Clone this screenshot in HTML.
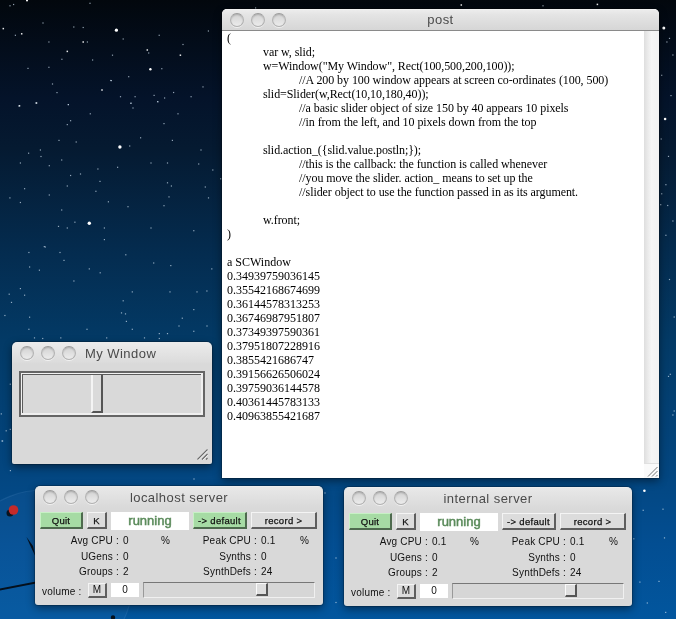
<!DOCTYPE html>
<html><head><meta charset="utf-8">
<style>
html,body{margin:0;padding:0;}
body>*{will-change:transform;}
body{width:676px;height:619px;overflow:hidden;position:relative;
 background:linear-gradient(to bottom,#02070d 0%,#04132a 16%,#051a31 24%,#042b4e 40%,#033a66 55%,#03457e 75%,#034e92 88%,#02569e 100%);
 font-family:"Liberation Sans",sans-serif;}
.abs{position:absolute;}
.win{position:absolute;border-radius:5px 5px 0 0;box-shadow:0 0 0 1px rgba(0,0,0,0.2),0 3px 9px rgba(0,0,0,0.45);}
.tl{position:absolute;width:14px;height:14px;box-sizing:border-box;border-radius:50%;border:1px solid #b2b2b2;border-top-color:#9c9c9c;background:linear-gradient(to bottom,#d2d2d2,#e2e2e2 60%,#ececec);box-shadow:inset 0 1px 1.5px rgba(0,0,0,0.18),0 1px 0 rgba(255,255,255,0.6);}
.title{position:absolute;left:0;right:0;text-align:center;font-size:13px;color:#4a4a4a;letter-spacing:0.45px;}
.post{left:222px;top:9px;width:437px;height:469px;background:#fff;}
.post .tb{position:absolute;left:0;top:0;width:437px;height:21px;border-radius:5px 5px 0 0;
 background:linear-gradient(to bottom,#f8f8f8 0px,#ececec 1px,#e4e4e4 6px,#d6d6d6 21px);border-bottom:1px solid #8a8a8a;}
.txt{position:absolute;left:5px;top:22px;transform:translateY(0.2px);font-family:"Liberation Serif",serif;font-size:12px;line-height:14px;color:#000;white-space:pre;}
.t1{padding-left:36px;letter-spacing:-0.07px}.t2{padding-left:72px;letter-spacing:-0.07px}
.sb{position:absolute;left:422px;top:22px;width:15px;height:432px;background:linear-gradient(to right,#dedede,#f6f6f6 50%,#f2f2f2);}
.rz{position:absolute;left:422px;top:454px;width:15px;height:15px;box-sizing:border-box;background:#fafafa;border-top:1px solid #e0e0e0;}
.mywin{left:12px;top:342px;width:200px;height:122px;background:linear-gradient(to bottom,#ececec 0px,#dcdcdc 20px,#d9d9d9 22px);border-radius:5px 5px 2px 2px;}
.srv{width:288px;height:118px;border-top:1px solid #ededed;background:linear-gradient(to bottom,#e8e8e8 0px,#dbdbdb 18px,#d9d9d9 22px);border-radius:5px 5px 3px 3px;}
.btn{position:absolute;height:17px;box-sizing:border-box;text-align:center;font-size:9.5px;line-height:15px;padding-top:0px;color:#111;-webkit-text-stroke:0.25px #111;letter-spacing:0.3px;
 border-top:1px solid #f4f4f4;border-left:1px solid #f4f4f4;border-right:2px solid #5e5e5e;border-bottom:2px solid #5e5e5e;background:#dcdcdc;}
.grn{background:#a6dba4;border-top-color:#c8f0c6;border-left-color:#c8f0c6;border-right-color:#4e6a4e;border-bottom-color:#4e6a4e;}
.lbl{position:absolute;font-size:10px;color:#111;white-space:pre;letter-spacing:0.2px;margin-top:1px;}
.fld{position:absolute;background:#fff;box-sizing:border-box;}
.run{position:absolute;left:0;right:0;top:1px;text-align:center;font-size:13px;color:#5b8b5b;-webkit-text-stroke:0.5px #5b8b5b;}
.lbl.r{text-align:right;}
.sld{position:absolute;box-sizing:border-box;background:#d6d6d6;border-top:1px solid #777;border-left:1px solid #999;border-right:1px solid #f0f0f0;border-bottom:1px solid #f0f0f0;}
.knob{position:absolute;box-sizing:border-box;background:#dedede;border-top:1px solid #fafafa;border-left:1px solid #fafafa;border-right:2px solid #555;border-bottom:2px solid #555;}
</style></head>
<body>
<svg class="abs" style="left:0;top:0" width="676" height="619" viewBox="0 0 676 619"><circle cx="43" cy="580" r="90" fill="rgba(120,170,230,0.06)" stroke="rgba(150,190,240,0.12)" stroke-width="1.2"/>
<path d="M26.5 537 L30 545 L35.5 556.5 L33 546 Z" fill="#05101c"/>
<path d="M0 590.5 L36 583.5 L36 581.5 L0 588.5 Z" fill="#05101c"/>
<circle cx="10" cy="513" r="3.5" fill="#0a1420"/>
<circle cx="13.5" cy="510" r="4.8" fill="#c42a2a"/>
<circle cx="113" cy="617.5" r="2.2" fill="#05101c"/><circle cx="116.4" cy="30.2" r="1.6" fill="#fff"/><circle cx="119.9" cy="147" r="1.7" fill="#fff"/><circle cx="89.3" cy="223.2" r="1.7" fill="#fff"/><circle cx="150.4" cy="69.2" r="1.2" fill="#fff"/><circle cx="663.8" cy="28" r="1.5" fill="#fff"/><circle cx="665.1" cy="119" r="1.3" fill="#fff"/><circle cx="644.4" cy="490.8" r="1.3" fill="#fff"/><circle cx="27" cy="0.5" r="1.0" fill="#fff"/><rect x="2.55" y="27.85" width="1.5" height="1.5" fill="#fff" opacity="0.9"/><rect x="20.95" y="33.05" width="1.5" height="1.5" fill="#fff" opacity="0.9"/><rect x="82.45" y="41.25" width="1.5" height="1.5" fill="#fff" opacity="0.9"/><rect x="66.55" y="50.65" width="1.5" height="1.5" fill="#fff" opacity="0.9"/><rect x="101.25" y="89.25" width="1.5" height="1.5" fill="#fff" opacity="0.9"/><rect x="18.75" y="105.05" width="1.5" height="1.5" fill="#fff" opacity="0.9"/><rect x="35.75" y="102.25" width="1.5" height="1.5" fill="#fff" opacity="0.9"/><rect x="146.55" y="49.25" width="1.5" height="1.5" fill="#fff" opacity="0.9"/><rect x="179.65" y="54.45" width="1.5" height="1.5" fill="#fff" opacity="0.9"/><rect x="460.55" y="4.25" width="1.5" height="1.5" fill="#fff" opacity="0.9"/><rect x="596.65" y="3.65" width="1.5" height="1.5" fill="#fff" opacity="0.9"/><rect x="13.00" y="3.90" width="1.2" height="1.2" fill="#cfe0f0" opacity="0.7"/><rect x="9.40" y="5.20" width="1.2" height="1.2" fill="#cfe0f0" opacity="0.7"/><rect x="89.40" y="2.70" width="1.2" height="1.2" fill="#cfe0f0" opacity="0.7"/><rect x="42.40" y="22.40" width="1.2" height="1.2" fill="#cfe0f0" opacity="0.7"/><rect x="14.80" y="34.70" width="1.2" height="1.2" fill="#cfe0f0" opacity="0.7"/><rect x="73.20" y="26.40" width="1.2" height="1.2" fill="#cfe0f0" opacity="0.7"/><rect x="82.60" y="26.90" width="1.2" height="1.2" fill="#cfe0f0" opacity="0.7"/><rect x="48.30" y="41.40" width="1.2" height="1.2" fill="#cfe0f0" opacity="0.7"/><rect x="86.80" y="41.40" width="1.2" height="1.2" fill="#cfe0f0" opacity="0.7"/><rect x="61.30" y="58.70" width="1.2" height="1.2" fill="#cfe0f0" opacity="0.7"/><rect x="92.00" y="59.40" width="1.2" height="1.2" fill="#cfe0f0" opacity="0.7"/><rect x="27.40" y="67.80" width="1.2" height="1.2" fill="#cfe0f0" opacity="0.7"/><rect x="48.30" y="66.70" width="1.2" height="1.2" fill="#cfe0f0" opacity="0.7"/><rect x="51.90" y="83.40" width="1.2" height="1.2" fill="#cfe0f0" opacity="0.7"/><rect x="56.40" y="92.00" width="1.2" height="1.2" fill="#cfe0f0" opacity="0.7"/><rect x="110.10" y="79.90" width="1.2" height="1.2" fill="#cfe0f0" opacity="0.7"/><rect x="67.80" y="104.00" width="1.2" height="1.2" fill="#cfe0f0" opacity="0.7"/><rect x="18.40" y="105.40" width="1.2" height="1.2" fill="#cfe0f0" opacity="0.7"/><rect x="35.40" y="102.40" width="1.2" height="1.2" fill="#cfe0f0" opacity="0.7"/><rect x="67.70" y="104.00" width="1.2" height="1.2" fill="#cfe0f0" opacity="0.7"/><rect x="130.10" y="102.70" width="1.2" height="1.2" fill="#cfe0f0" opacity="0.7"/><rect x="132.40" y="107.40" width="1.2" height="1.2" fill="#cfe0f0" opacity="0.7"/><rect x="157.00" y="101.00" width="1.2" height="1.2" fill="#cfe0f0" opacity="0.7"/><rect x="89.70" y="113.20" width="1.2" height="1.2" fill="#cfe0f0" opacity="0.7"/><rect x="70.00" y="120.10" width="1.2" height="1.2" fill="#cfe0f0" opacity="0.7"/><rect x="66.70" y="124.00" width="1.2" height="1.2" fill="#cfe0f0" opacity="0.7"/><rect x="163.40" y="123.00" width="1.2" height="1.2" fill="#cfe0f0" opacity="0.7"/><rect x="177.40" y="113.20" width="1.2" height="1.2" fill="#cfe0f0" opacity="0.7"/><rect x="58.40" y="139.80" width="1.2" height="1.2" fill="#cfe0f0" opacity="0.7"/><rect x="75.60" y="141.40" width="1.2" height="1.2" fill="#cfe0f0" opacity="0.7"/><rect x="140.00" y="137.20" width="1.2" height="1.2" fill="#cfe0f0" opacity="0.7"/><rect x="171.80" y="139.80" width="1.2" height="1.2" fill="#cfe0f0" opacity="0.7"/><rect x="129.10" y="145.40" width="1.2" height="1.2" fill="#cfe0f0" opacity="0.7"/><rect x="28.00" y="152.60" width="1.2" height="1.2" fill="#cfe0f0" opacity="0.7"/><rect x="39.80" y="149.40" width="1.2" height="1.2" fill="#cfe0f0" opacity="0.7"/><rect x="40.40" y="155.90" width="1.2" height="1.2" fill="#cfe0f0" opacity="0.7"/><rect x="200.40" y="149.40" width="1.2" height="1.2" fill="#cfe0f0" opacity="0.7"/><rect x="19.80" y="162.40" width="1.2" height="1.2" fill="#cfe0f0" opacity="0.7"/><rect x="61.10" y="159.40" width="1.2" height="1.2" fill="#cfe0f0" opacity="0.7"/><rect x="48.70" y="165.10" width="1.2" height="1.2" fill="#cfe0f0" opacity="0.7"/><rect x="97.30" y="168.40" width="1.2" height="1.2" fill="#cfe0f0" opacity="0.7"/><rect x="117.00" y="166.70" width="1.2" height="1.2" fill="#cfe0f0" opacity="0.7"/><rect x="150.40" y="162.40" width="1.2" height="1.2" fill="#cfe0f0" opacity="0.7"/><rect x="166.90" y="162.40" width="1.2" height="1.2" fill="#cfe0f0" opacity="0.7"/><rect x="198.10" y="163.40" width="1.2" height="1.2" fill="#cfe0f0" opacity="0.7"/><rect x="212.20" y="169.40" width="1.2" height="1.2" fill="#cfe0f0" opacity="0.7"/><rect x="70.00" y="174.90" width="1.2" height="1.2" fill="#cfe0f0" opacity="0.7"/><rect x="79.90" y="173.40" width="1.2" height="1.2" fill="#cfe0f0" opacity="0.7"/><rect x="99.40" y="180.80" width="1.2" height="1.2" fill="#cfe0f0" opacity="0.7"/><rect x="166.90" y="182.20" width="1.2" height="1.2" fill="#cfe0f0" opacity="0.7"/><rect x="170.80" y="185.40" width="1.2" height="1.2" fill="#cfe0f0" opacity="0.7"/><rect x="66.70" y="185.40" width="1.2" height="1.2" fill="#cfe0f0" opacity="0.7"/><rect x="24.00" y="188.10" width="1.2" height="1.2" fill="#cfe0f0" opacity="0.7"/><rect x="95.30" y="190.70" width="1.2" height="1.2" fill="#cfe0f0" opacity="0.7"/><rect x="204.70" y="186.40" width="1.2" height="1.2" fill="#cfe0f0" opacity="0.7"/><rect x="220.10" y="178.20" width="1.2" height="1.2" fill="#cfe0f0" opacity="0.7"/><rect x="48.70" y="194.40" width="1.2" height="1.2" fill="#cfe0f0" opacity="0.7"/><rect x="9.30" y="197.30" width="1.2" height="1.2" fill="#cfe0f0" opacity="0.7"/><rect x="168.40" y="196.30" width="1.2" height="1.2" fill="#cfe0f0" opacity="0.7"/><rect x="207.90" y="197.30" width="1.2" height="1.2" fill="#cfe0f0" opacity="0.7"/><rect x="19.80" y="201.90" width="1.2" height="1.2" fill="#cfe0f0" opacity="0.7"/><rect x="107.80" y="201.20" width="1.2" height="1.2" fill="#cfe0f0" opacity="0.7"/><rect x="127.40" y="206.10" width="1.2" height="1.2" fill="#cfe0f0" opacity="0.7"/><rect x="163.40" y="205.10" width="1.2" height="1.2" fill="#cfe0f0" opacity="0.7"/><rect x="61.10" y="209.40" width="1.2" height="1.2" fill="#cfe0f0" opacity="0.7"/><rect x="74.30" y="221.60" width="1.2" height="1.2" fill="#cfe0f0" opacity="0.7"/><rect x="57.90" y="225.80" width="1.2" height="1.2" fill="#cfe0f0" opacity="0.7"/><rect x="66.70" y="227.40" width="1.2" height="1.2" fill="#cfe0f0" opacity="0.7"/><rect x="103.80" y="227.40" width="1.2" height="1.2" fill="#cfe0f0" opacity="0.7"/><rect x="150.40" y="227.40" width="1.2" height="1.2" fill="#cfe0f0" opacity="0.7"/><rect x="193.20" y="230.10" width="1.2" height="1.2" fill="#cfe0f0" opacity="0.7"/><rect x="44.70" y="246.40" width="1.2" height="1.2" fill="#cfe0f0" opacity="0.7"/><rect x="103.80" y="239.00" width="1.2" height="1.2" fill="#cfe0f0" opacity="0.7"/><rect x="43.70" y="246.00" width="1.2" height="1.2" fill="#cfe0f0" opacity="0.7"/><rect x="28.30" y="251.90" width="1.2" height="1.2" fill="#cfe0f0" opacity="0.7"/><rect x="59.40" y="251.90" width="1.2" height="1.2" fill="#cfe0f0" opacity="0.7"/><rect x="125.20" y="254.20" width="1.2" height="1.2" fill="#cfe0f0" opacity="0.7"/><rect x="63.40" y="259.80" width="1.2" height="1.2" fill="#cfe0f0" opacity="0.7"/><rect x="153.10" y="262.40" width="1.2" height="1.2" fill="#cfe0f0" opacity="0.7"/><rect x="170.20" y="265.00" width="1.2" height="1.2" fill="#cfe0f0" opacity="0.7"/><rect x="29.00" y="266.40" width="1.2" height="1.2" fill="#cfe0f0" opacity="0.7"/><rect x="38.80" y="269.60" width="1.2" height="1.2" fill="#cfe0f0" opacity="0.7"/><rect x="88.70" y="268.30" width="1.2" height="1.2" fill="#cfe0f0" opacity="0.7"/><rect x="211.20" y="268.30" width="1.2" height="1.2" fill="#cfe0f0" opacity="0.7"/><rect x="99.60" y="272.20" width="1.2" height="1.2" fill="#cfe0f0" opacity="0.7"/><rect x="73.30" y="280.40" width="1.2" height="1.2" fill="#cfe0f0" opacity="0.7"/><rect x="19.80" y="288.00" width="1.2" height="1.2" fill="#cfe0f0" opacity="0.7"/><rect x="8.60" y="293.60" width="1.2" height="1.2" fill="#cfe0f0" opacity="0.7"/><rect x="24.00" y="294.60" width="1.2" height="1.2" fill="#cfe0f0" opacity="0.7"/><rect x="131.70" y="291.30" width="1.2" height="1.2" fill="#cfe0f0" opacity="0.7"/><rect x="169.40" y="291.30" width="1.2" height="1.2" fill="#cfe0f0" opacity="0.7"/><rect x="196.40" y="291.30" width="1.2" height="1.2" fill="#cfe0f0" opacity="0.7"/><rect x="206.30" y="290.40" width="1.2" height="1.2" fill="#cfe0f0" opacity="0.7"/><rect x="10.90" y="301.80" width="1.2" height="1.2" fill="#cfe0f0" opacity="0.7"/><rect x="122.60" y="300.20" width="1.2" height="1.2" fill="#cfe0f0" opacity="0.7"/><rect x="193.20" y="309.00" width="1.2" height="1.2" fill="#cfe0f0" opacity="0.7"/><rect x="124.90" y="313.30" width="1.2" height="1.2" fill="#cfe0f0" opacity="0.7"/><rect x="120.90" y="312.30" width="1.2" height="1.2" fill="#cfe0f0" opacity="0.7"/><rect x="125.80" y="320.80" width="1.2" height="1.2" fill="#cfe0f0" opacity="0.7"/><rect x="4.30" y="314.90" width="1.2" height="1.2" fill="#cfe0f0" opacity="0.7"/><rect x="29.00" y="316.60" width="1.2" height="1.2" fill="#cfe0f0" opacity="0.7"/><rect x="181.70" y="317.60" width="1.2" height="1.2" fill="#cfe0f0" opacity="0.7"/><rect x="178.40" y="325.40" width="1.2" height="1.2" fill="#cfe0f0" opacity="0.7"/><rect x="206.40" y="325.40" width="1.2" height="1.2" fill="#cfe0f0" opacity="0.7"/><rect x="28.30" y="328.70" width="1.2" height="1.2" fill="#cfe0f0" opacity="0.7"/><rect x="86.40" y="328.70" width="1.2" height="1.2" fill="#cfe0f0" opacity="0.7"/><rect x="131.70" y="328.70" width="1.2" height="1.2" fill="#cfe0f0" opacity="0.7"/><rect x="193.20" y="330.70" width="1.2" height="1.2" fill="#cfe0f0" opacity="0.7"/><rect x="33.90" y="337.30" width="1.2" height="1.2" fill="#cfe0f0" opacity="0.7"/><rect x="42.10" y="337.90" width="1.2" height="1.2" fill="#cfe0f0" opacity="0.7"/><rect x="60.20" y="337.30" width="1.2" height="1.2" fill="#cfe0f0" opacity="0.7"/><rect x="106.10" y="337.30" width="1.2" height="1.2" fill="#cfe0f0" opacity="0.7"/><rect x="143.90" y="337.30" width="1.2" height="1.2" fill="#cfe0f0" opacity="0.7"/><rect x="158.70" y="333.00" width="1.2" height="1.2" fill="#cfe0f0" opacity="0.7"/><rect x="158.70" y="337.90" width="1.2" height="1.2" fill="#cfe0f0" opacity="0.7"/><rect x="166.90" y="333.00" width="1.2" height="1.2" fill="#cfe0f0" opacity="0.7"/><rect x="122.60" y="38.40" width="1.2" height="1.2" fill="#cfe0f0" opacity="0.7"/><rect x="158.60" y="34.70" width="1.2" height="1.2" fill="#cfe0f0" opacity="0.7"/><rect x="207.80" y="30.40" width="1.2" height="1.2" fill="#cfe0f0" opacity="0.7"/><rect x="148.10" y="52.40" width="1.2" height="1.2" fill="#cfe0f0" opacity="0.7"/><rect x="182.40" y="43.90" width="1.2" height="1.2" fill="#cfe0f0" opacity="0.7"/><rect x="111.90" y="54.60" width="1.2" height="1.2" fill="#cfe0f0" opacity="0.7"/><rect x="161.20" y="68.10" width="1.2" height="1.2" fill="#cfe0f0" opacity="0.7"/><rect x="128.10" y="76.10" width="1.2" height="1.2" fill="#cfe0f0" opacity="0.7"/><rect x="110.80" y="80.00" width="1.2" height="1.2" fill="#cfe0f0" opacity="0.7"/><rect x="202.40" y="86.30" width="1.2" height="1.2" fill="#cfe0f0" opacity="0.7"/><rect x="173.00" y="91.90" width="1.2" height="1.2" fill="#cfe0f0" opacity="0.7"/><rect x="153.50" y="94.80" width="1.2" height="1.2" fill="#cfe0f0" opacity="0.7"/><rect x="134.50" y="96.10" width="1.2" height="1.2" fill="#cfe0f0" opacity="0.7"/><rect x="119.90" y="96.10" width="1.2" height="1.2" fill="#cfe0f0" opacity="0.7"/><rect x="164.00" y="97.40" width="1.2" height="1.2" fill="#cfe0f0" opacity="0.7"/><rect x="190.50" y="96.10" width="1.2" height="1.2" fill="#cfe0f0" opacity="0.7"/><rect x="157.30" y="101.20" width="1.2" height="1.2" fill="#cfe0f0" opacity="0.7"/><rect x="130.60" y="102.60" width="1.2" height="1.2" fill="#cfe0f0" opacity="0.7"/><rect x="255.00" y="7.40" width="1.2" height="1.2" fill="#cfe0f0" opacity="0.7"/><rect x="542.40" y="5.20" width="1.2" height="1.2" fill="#cfe0f0" opacity="0.7"/><rect x="668.90" y="37.80" width="1.2" height="1.2" fill="#cfe0f0" opacity="0.7"/><rect x="666.30" y="41.40" width="1.2" height="1.2" fill="#cfe0f0" opacity="0.7"/><rect x="672.30" y="54.40" width="1.2" height="1.2" fill="#cfe0f0" opacity="0.7"/><rect x="661.10" y="74.70" width="1.2" height="1.2" fill="#cfe0f0" opacity="0.7"/><rect x="670.40" y="95.00" width="1.2" height="1.2" fill="#cfe0f0" opacity="0.7"/><rect x="660.60" y="138.40" width="1.2" height="1.2" fill="#cfe0f0" opacity="0.7"/><rect x="667.90" y="155.80" width="1.2" height="1.2" fill="#cfe0f0" opacity="0.7"/><rect x="665.30" y="184.10" width="1.2" height="1.2" fill="#cfe0f0" opacity="0.7"/><rect x="661.10" y="193.20" width="1.2" height="1.2" fill="#cfe0f0" opacity="0.7"/><rect x="667.10" y="204.90" width="1.2" height="1.2" fill="#cfe0f0" opacity="0.7"/><rect x="660.10" y="204.10" width="1.2" height="1.2" fill="#cfe0f0" opacity="0.7"/><rect x="672.30" y="220.40" width="1.2" height="1.2" fill="#cfe0f0" opacity="0.7"/><rect x="665.30" y="234.70" width="1.2" height="1.2" fill="#cfe0f0" opacity="0.7"/><rect x="668.90" y="278.90" width="1.2" height="1.2" fill="#cfe0f0" opacity="0.7"/><rect x="673.60" y="316.40" width="1.2" height="1.2" fill="#cfe0f0" opacity="0.7"/><rect x="669.70" y="373.70" width="1.2" height="1.2" fill="#cfe0f0" opacity="0.7"/><rect x="667.90" y="375.80" width="1.2" height="1.2" fill="#cfe0f0" opacity="0.7"/><rect x="673.60" y="410.40" width="1.2" height="1.2" fill="#cfe0f0" opacity="0.7"/><rect x="672.30" y="414.40" width="1.2" height="1.2" fill="#cfe0f0" opacity="0.7"/><rect x="642.60" y="509.70" width="1.2" height="1.2" fill="#cfe0f0" opacity="0.7"/><rect x="662.40" y="508.60" width="1.2" height="1.2" fill="#cfe0f0" opacity="0.7"/><rect x="633.20" y="538.20" width="1.2" height="1.2" fill="#cfe0f0" opacity="0.7"/><rect x="663.90" y="537.30" width="1.2" height="1.2" fill="#cfe0f0" opacity="0.7"/><rect x="639.30" y="581.50" width="1.2" height="1.2" fill="#cfe0f0" opacity="0.7"/><rect x="658.40" y="580.80" width="1.2" height="1.2" fill="#cfe0f0" opacity="0.7"/><rect x="646.70" y="602.40" width="1.2" height="1.2" fill="#cfe0f0" opacity="0.7"/><rect x="665.10" y="611.80" width="1.2" height="1.2" fill="#cfe0f0" opacity="0.7"/><rect x="5.60" y="430.20" width="1.2" height="1.2" fill="#cfe0f0" opacity="0.7"/><rect x="2.00" y="440.40" width="1.2" height="1.2" fill="#cfe0f0" opacity="0.7"/><rect x="193.40" y="478.40" width="1.2" height="1.2" fill="#cfe0f0" opacity="0.7"/><rect x="9.80" y="470.00" width="1.2" height="1.2" fill="#cfe0f0" opacity="0.7"/><rect x="324.40" y="492.40" width="1.2" height="1.2" fill="#cfe0f0" opacity="0.7"/><rect x="335.40" y="557.40" width="1.2" height="1.2" fill="#cfe0f0" opacity="0.7"/><rect x="335.40" y="601.90" width="1.2" height="1.2" fill="#cfe0f0" opacity="0.7"/><rect x="9.70" y="383.60" width="1.2" height="1.2" fill="#cfe0f0" opacity="0.7"/><rect x="0.70" y="413.30" width="1.2" height="1.2" fill="#cfe0f0" opacity="0.7"/><rect x="9.70" y="428.80" width="1.2" height="1.2" fill="#cfe0f0" opacity="0.7"/><rect x="1.40" y="440.40" width="1.2" height="1.2" fill="#cfe0f0" opacity="0.7"/></svg>

<!-- post window -->
<div class="win post">
  <div class="tb">
    <div class="tl" style="left:8px;top:3.5px"></div>
    <div class="tl" style="left:29px;top:3.5px"></div>
    <div class="tl" style="left:50px;top:3.5px"></div>
    <div class="title" style="top:3px">post</div>
  </div>
  <div class="txt">(
<span class="t1">var w, slid;</span>
<span class="t1">w=Window("My Window", Rect(100,500,200,100));</span>
<span class="t2">//A 200 by 100 window appears at screen co-ordinates (100, 500)</span>
<span class="t1">slid=Slider(w,Rect(10,10,180,40));</span>
<span class="t2">//a basic slider object of size 150 by 40 appears 10 pixels</span>
<span class="t2">//in from the left, and 10 pixels down from the top</span>

<span class="t1">slid.action_({slid.value.postln;});</span>
<span class="t2">//this is the callback: the function is called whenever</span>
<span class="t2">//you move the slider. action_ means to set up the</span>
<span class="t2">//slider object to use the function passed in as its argument.</span>

<span class="t1">w.front;</span>
)

a SCWindow
0.34939759036145
0.35542168674699
0.36144578313253
0.36746987951807
0.37349397590361
0.37951807228916
0.3855421686747
0.39156626506024
0.39759036144578
0.40361445783133
0.40963855421687</div>
  <div class="sb"></div>
  <div class="rz"><svg class="abs" style="left:0;top:-1px" width="15" height="15" viewBox="0 0 15 15"><path d="M4 13.5 L13.5 4 M8 13.5 L13.5 8 M12 13.5 L13.5 12" stroke="#666" stroke-width="0.9" fill="none"/><path d="M5 14 L14 5 M9 14 L14 9" stroke="#ffffff" stroke-width="0.8" fill="none"/></svg></div>
</div>

<!-- My Window -->
<div class="win mywin">
  <div class="tl" style="left:8px;top:4px"></div>
  <div class="tl" style="left:29px;top:4px"></div>
  <div class="tl" style="left:50px;top:4px"></div>
  <div class="title" style="top:4px;left:73px;right:auto">My Window</div>
  <div class="abs" style="left:7px;top:29px;width:186px;height:46px;box-sizing:border-box;border:2px solid #656565;"></div>
  <div class="abs" style="left:9px;top:31px;width:182px;height:42px;box-sizing:border-box;border-top:1px solid #f2f2f2;border-left:1px solid #f2f2f2;border-right:2px solid #efefef;border-bottom:2px solid #efefef;"></div>
  <div class="abs" style="left:10px;top:32px;width:179px;height:39px;box-sizing:border-box;border-top:1px solid #5c5c5c;border-left:1px solid #5c5c5c;"></div>
  <div class="abs" style="left:79px;top:33px;width:12px;height:38px;box-sizing:border-box;border-left:2px solid #f4f4f4;border-right:2px solid #555;border-bottom:2px solid #555;background:#dadada"></div>
  <svg class="abs" style="left:184px;top:106px" width="13" height="13" viewBox="0 0 13 13"><path d="M1.5 11.5 L11.5 1.5 M6 11.5 L11.5 6 M10 11.5 L11.5 10" stroke="#6a6a6a" stroke-width="1.1" fill="none"/><path d="M2.5 12 L12 2.5 M7 12 L12 7" stroke="#f4f4f4" stroke-width="0.8" fill="none"/></svg>
</div>

<!-- localhost server -->
<div class="win srv" style="left:35px;top:486px">
  <div class="tl" style="left:8px;top:3px"></div>
  <div class="tl" style="left:29px;top:3px"></div>
  <div class="tl" style="left:50px;top:3px"></div>
  <div class="title" style="top:3px">localhost server</div>
  <div class="btn grn" style="left:5px;top:25px;width:43px">Quit</div>
  <div class="btn" style="left:52px;top:25px;width:20px">K</div>
  <div class="fld" style="left:76px;top:25px;width:78px;height:18px"><span class="run">running</span></div>
  <div class="btn grn" style="left:158px;top:25px;width:54px">-&gt; default</div>
  <div class="btn" style="left:216px;top:25px;width:66px">record &gt;</div>
  <div class="lbl r" style="right:204px;top:47px">Avg CPU :</div>
  <div class="lbl" style="left:88px;top:47px">0</div>
  <div class="lbl" style="left:126px;top:47px">%</div>
  <div class="lbl r" style="right:204px;top:63px">UGens :</div>
  <div class="lbl" style="left:88px;top:63px">0</div>
  <div class="lbl r" style="right:204px;top:78px">Groups :</div>
  <div class="lbl" style="left:88px;top:78px">2</div>
  <div class="lbl r" style="right:66px;top:47px">Peak CPU :</div>
  <div class="lbl" style="left:226px;top:47px">0.1</div>
  <div class="lbl" style="left:265px;top:47px">%</div>
  <div class="lbl r" style="right:66px;top:63px">Synths :</div>
  <div class="lbl" style="left:226px;top:63px">0</div>
  <div class="lbl r" style="right:66px;top:78px">SynthDefs :</div>
  <div class="lbl" style="left:226px;top:78px">24</div>
  <div class="lbl" style="left:7px;top:97.5px">volume :</div>
  <div class="btn" style="left:53px;top:96px;width:19px;height:15px;line-height:12px;padding-top:0;font-weight:normal;font-size:10px;-webkit-text-stroke:0">M</div>
  <div class="fld" style="left:76px;top:96px;width:28px;height:14px;font-size:10px;line-height:14px;text-align:center;color:#111">0</div>
  <div class="sld" style="left:108px;top:95px;width:172px;height:16px"></div>
  <div class="knob" style="left:221px;top:96px;width:12px;height:13px"></div>
</div>

<!-- internal server -->
<div class="win srv" style="left:344px;top:487px">
  <div class="tl" style="left:8px;top:3px"></div>
  <div class="tl" style="left:29px;top:3px"></div>
  <div class="tl" style="left:50px;top:3px"></div>
  <div class="title" style="top:3px">internal server</div>
  <div class="btn grn" style="left:5px;top:25px;width:43px">Quit</div>
  <div class="btn" style="left:52px;top:25px;width:20px">K</div>
  <div class="fld" style="left:76px;top:25px;width:78px;height:18px"><span class="run">running</span></div>
  <div class="btn" style="left:158px;top:25px;width:54px">-&gt; default</div>
  <div class="btn" style="left:216px;top:25px;width:66px">record &gt;</div>
  <div class="lbl r" style="right:204px;top:47px">Avg CPU :</div>
  <div class="lbl" style="left:88px;top:47px">0.1</div>
  <div class="lbl" style="left:126px;top:47px">%</div>
  <div class="lbl r" style="right:204px;top:63px">UGens :</div>
  <div class="lbl" style="left:88px;top:63px">0</div>
  <div class="lbl r" style="right:204px;top:78px">Groups :</div>
  <div class="lbl" style="left:88px;top:78px">2</div>
  <div class="lbl r" style="right:66px;top:47px">Peak CPU :</div>
  <div class="lbl" style="left:226px;top:47px">0.1</div>
  <div class="lbl" style="left:265px;top:47px">%</div>
  <div class="lbl r" style="right:66px;top:63px">Synths :</div>
  <div class="lbl" style="left:226px;top:63px">0</div>
  <div class="lbl r" style="right:66px;top:78px">SynthDefs :</div>
  <div class="lbl" style="left:226px;top:78px">24</div>
  <div class="lbl" style="left:7px;top:97.5px">volume :</div>
  <div class="btn" style="left:53px;top:96px;width:19px;height:15px;line-height:12px;padding-top:0;font-weight:normal;font-size:10px;-webkit-text-stroke:0">M</div>
  <div class="fld" style="left:76px;top:96px;width:28px;height:14px;font-size:10px;line-height:14px;text-align:center;color:#111">0</div>
  <div class="sld" style="left:108px;top:95px;width:172px;height:16px"></div>
  <div class="knob" style="left:221px;top:96px;width:12px;height:13px"></div>
</div>

</body></html>
